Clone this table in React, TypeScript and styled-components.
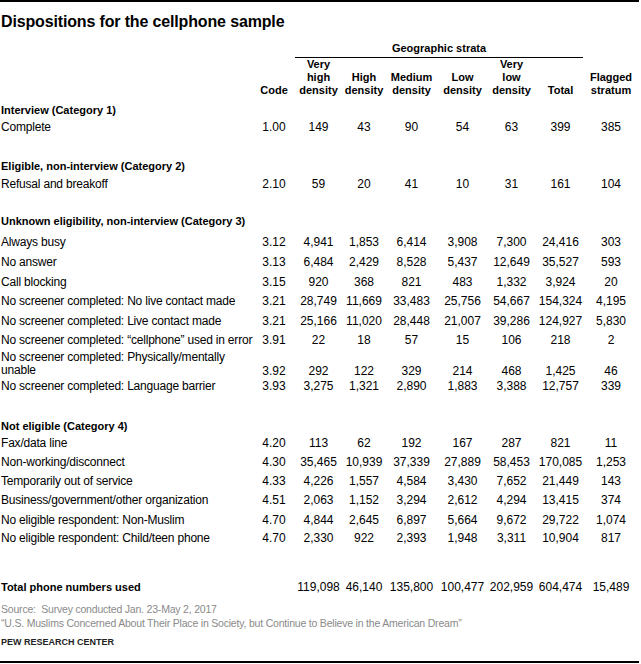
import React from 'react';
import styled, { createGlobalStyle } from 'styled-components';

const GlobalStyle = createGlobalStyle`
  html, body { margin: 0; padding: 0; background: #fff; }
  body { font-family: "Liberation Sans", Arial, sans-serif; color: #000; }
`;

const COLS = '252px 42px 47px 44px 51px 51px 47px 51px 50px';

type DataRow = { label: string; values: string[]; h: number };
type Group = { title: string; gap: number; h: number; rows: DataRow[] };

const groups: Group[] = [
  {
    title: 'Interview (Category 1)',
    gap: 0,
    h: 23.5,
    rows: [{ label: 'Complete', values: ['1.00', '149', '43', '90', '54', '63', '399', '385'], h: 17 }],
  },
  {
    title: 'Eligible, non-interview (Category 2)',
    gap: 20,
    h: 19.5,
    rows: [{ label: 'Refusal and breakoff', values: ['2.10', '59', '20', '41', '10', '31', '161', '104'], h: 18 }],
  },
  {
    title: 'Unknown eligibility, non-interview (Category 3)',
    gap: 17.5,
    h: 19.5,
    rows: [
      { label: 'Always busy', values: ['3.12', '4,941', '1,853', '6,414', '3,908', '7,300', '24,416', '303'], h: 20.5 },
      { label: 'No answer', values: ['3.13', '6,484', '2,429', '8,528', '5,437', '12,649', '35,527', '593'], h: 20 },
      { label: 'Call blocking', values: ['3.15', '920', '368', '821', '483', '1,332', '3,924', '20'], h: 20 },
      { label: 'No screener completed: No live contact made', values: ['3.21', '28,749', '11,669', '33,483', '25,756', '54,667', '154,324', '4,195'], h: 19 },
      { label: 'No screener completed: Live contact made', values: ['3.21', '25,166', '11,020', '28,448', '21,007', '39,286', '124,927', '5,830'], h: 20 },
      { label: 'No screener completed: \u201Ccellphone\u201D used in error', values: ['3.91', '22', '18', '57', '15', '106', '218', '2'], h: 19 },
      { label: 'No screener completed: Physically/mentally\nunable', values: ['3.92', '292', '122', '329', '214', '468', '1,425', '46'], h: 26.5 },
      { label: 'No screener completed: Language barrier', values: ['3.93', '3,275', '1,321', '2,890', '1,883', '3,388', '12,757', '339'], h: 19.5 },
    ],
  },
  {
    title: 'Not eligible (Category 4)',
    gap: 20.5,
    h: 19.5,
    rows: [
      { label: 'Fax/data line', values: ['4.20', '113', '62', '192', '167', '287', '821', '11'], h: 17.5 },
      { label: 'Non-working/disconnect', values: ['4.30', '35,465', '10,939', '37,339', '27,889', '58,453', '170,085', '1,253'], h: 18.5 },
      { label: 'Temporarily out of service', values: ['4.33', '4,226', '1,557', '4,584', '3,430', '7,652', '21,449', '143'], h: 19 },
      { label: 'Business/government/other organization', values: ['4.51', '2,063', '1,152', '3,294', '2,612', '4,294', '13,415', '374'], h: 19 },
      { label: 'No eligible respondent: Non-Muslim', values: ['4.70', '4,844', '2,645', '6,897', '5,664', '9,672', '29,722', '1,074'], h: 20 },
      { label: 'No eligible respondent: Child/teen phone', values: ['4.70', '2,330', '922', '2,393', '1,948', '3,311', '10,904', '817'], h: 18.5 },
    ],
  },
];

const totals = ['', '119,098', '46,140', '135,800', '100,477', '202,959', '604,474', '15,489'];

const Page = styled.div`
  width: 639px;
  border-top: 2px solid #000;
  border-bottom: 2px solid #000;
`;

const Inner = styled.div`
  padding: 0 1px 13px 1px;
`;

const Title = styled.h1`
  margin: 10px 0 0 0;
  font-size: 16px;
  line-height: 20px;
  font-weight: 700;
  letter-spacing: -0.15px;
`;

const HeaderGrid = styled.div`
  display: grid;
  grid-template-columns: ${COLS};
  margin-top: 10px;
  font-size: 11px;
  line-height: 13px;
  font-weight: 700;
`;

const Strata = styled.div`
  grid-column: 3 / 9;
  grid-row: 1;
  margin-right: 3px;
  text-align: center;
  padding-bottom: 2px;
  border-bottom: 1px solid #000;
`;

const ColHead = styled.div<{ $col: number }>`
  grid-column: ${(p) => p.$col};
  grid-row: 2;
  align-self: end;
  text-align: center;
  white-space: pre;
`;

const Row = styled.div<{ $h: number; $gap?: number }>`
  display: grid;
  grid-template-columns: ${COLS};
  align-items: end;
  box-sizing: border-box;
  height: ${(p) => p.$h}px;
  margin-top: ${(p) => p.$gap ?? 0}px;
  padding-bottom: 4px;
  font-size: 12px;
  line-height: 13px;
`;

const Heading = styled.div<{ $span?: boolean }>`
  grid-column: ${(p) => (p.$span ? '1 / -1' : '1')};
  font-size: 11px;
  font-weight: 700;
  white-space: nowrap;
`;

const Label = styled.div<{ $lh: number }>`
  white-space: pre;
  letter-spacing: -0.2px;
  line-height: ${(p) => p.$lh}px;
`;

const Num = styled.div`
  text-align: center;
  white-space: nowrap;
`;

const Footer = styled.div`
  margin-top: 4px;
`;

const Note = styled.div`
  font-size: 10.5px;
  line-height: 14px;
  color: #8a8a8a;
  letter-spacing: -0.2px;
  white-space: pre;
`;

const Brand = styled.div`
  margin-top: 6px;
  font-size: 9px;
  line-height: 12px;
  font-weight: 700;
  color: #222;
`;

const headers = [
  'Code',
  'Very\nhigh\ndensity',
  'High\ndensity',
  'Medium\ndensity',
  'Low\ndensity',
  'Very\nlow\ndensity',
  'Total',
  'Flagged\nstratum',
];

export default function App() {
  return (
    <>
      <GlobalStyle />
      <Page>
        <Inner>
          <Title>Dispositions for the cellphone sample</Title>
          <HeaderGrid>
            <Strata>Geographic strata</Strata>
            {headers.map((h, i) => (
              <ColHead key={h} $col={i + 2}>
                {h}
              </ColHead>
            ))}
          </HeaderGrid>
          {groups.map((g) => (
            <React.Fragment key={g.title}>
              <Row $h={g.h} $gap={g.gap}>
                <Heading $span>{g.title}</Heading>
              </Row>
              {g.rows.map((r, idx) => (
                <Row key={idx} $h={r.h}>
                  <Label $lh={r.label.includes('\n') ? 13.5 : 13}>{r.label}</Label>
                  {r.values.map((v, j) => (
                    <Num key={j}>{v}</Num>
                  ))}
                </Row>
              ))}
            </React.Fragment>
          ))}
          <Row $h={19.5} $gap={29.5}>
            <Heading>Total phone numbers used</Heading>
            {totals.map((v, j) => (
              <Num key={j}>{v}</Num>
            ))}
          </Row>
          <Footer>
            <Note>Source:  Survey conducted Jan. 23-May 2, 2017</Note>
            <Note>{'\u201CU.S. Muslims Concerned About Their Place in Society, but Continue to Believe in the American Dream\u201D'}</Note>
            <Brand>PEW RESEARCH CENTER</Brand>
          </Footer>
        </Inner>
      </Page>
    </>
  );
}
